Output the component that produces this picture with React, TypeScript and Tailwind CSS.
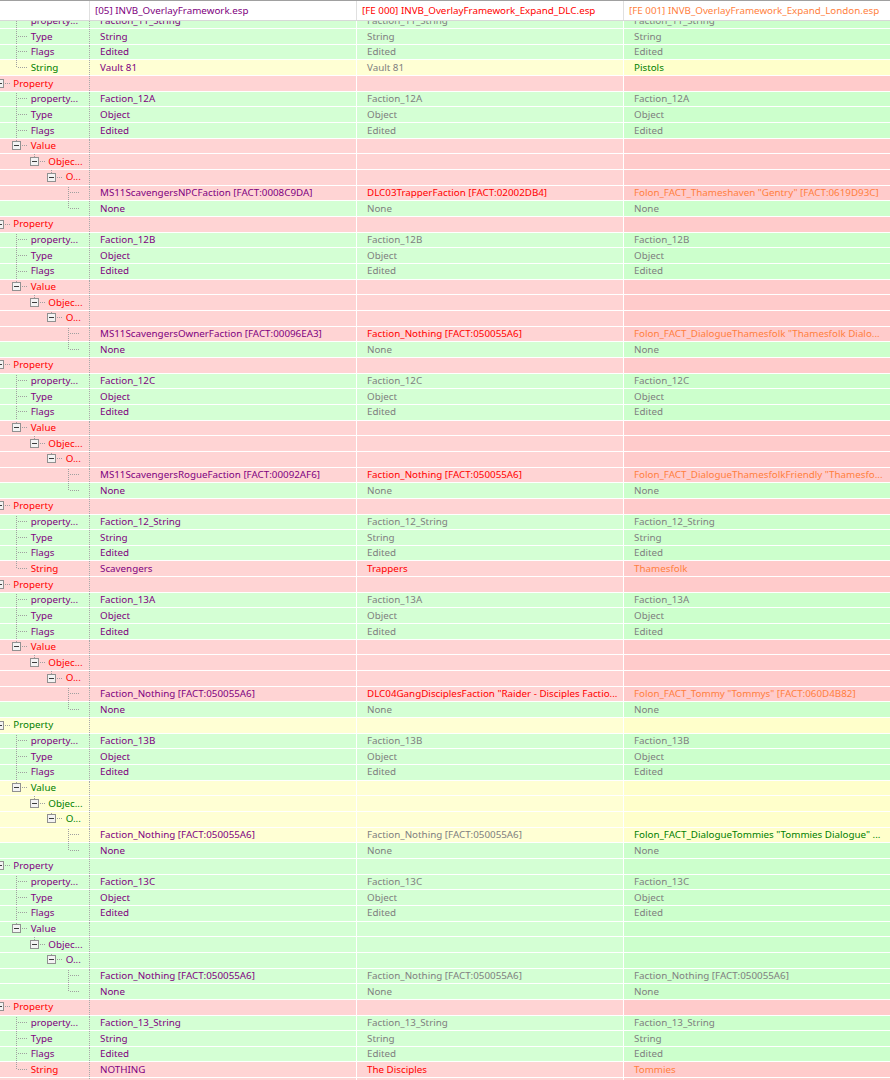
import React from 'react';

type Bg = 'g' | 'p' | 'y';
type C = 'pu' | 're' | 'gr' | 'or' | 'gn' | 'no';
type V = [string, C];

interface Row {
  level: number;
  label: string;
  box: boolean;
  last: boolean;
  bg: Bg;
  lc: C;
  v: V[];
}

const TXT: Record<C, string> = {
  pu: 'text-[#800080]',
  re: 'text-[#ff0000]',
  gr: 'text-[#808080]',
  or: 'text-[#ff7f40]',
  gn: 'text-[#008000]',
  no: '',
};

const BG: Record<Bg, string> = {
  g: 'bg-[#d4ffd4]',
  p: 'bg-[#ffd4d4]',
  y: 'bg-[#ffffd4]',
};
const BG4: Record<Bg, string> = {
  g: 'bg-[#ccffcc]',
  p: 'bg-[#ffcbcb]',
  y: 'bg-[#ffffcb]',
};

const E: V[] = [['', 'no'], ['', 'no'], ['', 'no']];
const RH = 15.66;
const LINE_PX = [-1, 16, 34, 51, 68];
const TEXT_X = [13.3, 30.7, 48.3, 65.7, 82.7];

function mk(level: number, label: string, box: boolean, last: boolean, bg: Bg, lc: C, v: V[]): Row {
  return { level, label, box, last, bg, lc, v };
}

function common(name: string, type: string): Row[] {
  return [
    mk(1, 'property...', false, false, 'g', 'pu', [[name, 'pu'], [name, 'gr'], [name, 'gr']]),
    mk(1, 'Type', false, false, 'g', 'pu', [[type, 'pu'], [type, 'gr'], [type, 'gr']]),
    mk(1, 'Flags', false, false, 'g', 'pu', [['Edited', 'pu'], ['Edited', 'gr'], ['Edited', 'gr']]),
  ];
}

function objGroup(name: string, bg: Bg, lc: C, leaf: V[]): Row[] {
  return [
    mk(0, 'Property', true, false, bg, lc, E),
    ...common(name, 'Object'),
    mk(1, 'Value', true, true, bg, lc, E),
    mk(2, 'Objec...', true, true, bg, lc, E),
    mk(3, 'O...', true, true, bg, lc, E),
    mk(4, '', false, false, bg, lc, leaf),
    mk(4, '', false, true, 'g', 'pu', [['None', 'pu'], ['None', 'gr'], ['None', 'gr']]),
  ];
}

function strGroup(name: string, bg: Bg, lc: C, vals: V[]): Row[] {
  return [
    mk(0, 'Property', true, false, bg, lc, E),
    ...common(name, 'String'),
    mk(1, 'String', false, true, bg, lc, vals),
  ];
}

const ROWS: Row[] = [
  ...strGroup('Faction_11_String', 'y', 'gn', [['Vault 81', 'pu'], ['Vault 81', 'gr'], ['Pistols', 'gn']]).slice(1),
  ...objGroup('Faction_12A', 'p', 're', [
    ['MS11ScavengersNPCFaction [FACT:0008C9DA]', 'pu'],
    ['DLC03TrapperFaction [FACT:02002DB4]', 're'],
    ['Folon_FACT_Thameshaven "Gentry" [FACT:0619D93C]', 'or'],
  ]),
  ...objGroup('Faction_12B', 'p', 're', [
    ['MS11ScavengersOwnerFaction [FACT:00096EA3]', 'pu'],
    ['Faction_Nothing [FACT:050055A6]', 're'],
    ['Folon_FACT_DialogueThamesfolk "Thamesfolk Dialo...', 'or'],
  ]),
  ...objGroup('Faction_12C', 'p', 're', [
    ['MS11ScavengersRogueFaction [FACT:00092AF6]', 'pu'],
    ['Faction_Nothing [FACT:050055A6]', 're'],
    ['Folon_FACT_DialogueThamesfolkFriendly "Thamesfo...', 'or'],
  ]),
  ...strGroup('Faction_12_String', 'p', 're', [['Scavengers', 'pu'], ['Trappers', 're'], ['Thamesfolk', 'or']]),
  ...objGroup('Faction_13A', 'p', 're', [
    ['Faction_Nothing [FACT:050055A6]', 'pu'],
    ['DLC04GangDisciplesFaction "Raider - Disciples Factio...', 're'],
    ['Folon_FACT_Tommy "Tommys" [FACT:060D4B82]', 'or'],
  ]),
  ...objGroup('Faction_13B', 'y', 'gn', [
    ['Faction_Nothing [FACT:050055A6]', 'pu'],
    ['Faction_Nothing [FACT:050055A6]', 'gr'],
    ['Folon_FACT_DialogueTommies "Tommies Dialogue" ...', 'gn'],
  ]),
  ...objGroup('Faction_13C', 'g', 'pu', [
    ['Faction_Nothing [FACT:050055A6]', 'pu'],
    ['Faction_Nothing [FACT:050055A6]', 'gr'],
    ['Faction_Nothing [FACT:050055A6]', 'gr'],
  ]),
  ...strGroup('Faction_13_String', 'p', 're', [['NOTHING', 'pu'], ['The Disciples', 're'], ['Tommies', 'or']]),
  ...strGroup('Faction_14_String', 'p', 're', [['NOTHING', 'pu'], ['The Disciples', 're'], ['Tommies', 'or']]).slice(0, 2),
];

function TreeGlyph({ row }: { row: Row }) {
  const px = LINE_PX[row.level];
  const cx = px + 0.5;
  const tx = TEXT_X[row.level];
  const my = 7.5;
  const dot = { stroke: '#a0a0a0', strokeWidth: 1, strokeDasharray: '1 1' } as const;
  return (
    <svg width={tx} height={RH} className="shrink-0 overflow-hidden" shapeRendering="crispEdges">
      {row.level >= 1 && !row.box && (
        <line x1={cx} y1={0} x2={cx} y2={row.last ? my : RH} {...dot} />
      )}
      {row.level >= 1 && row.box && <line x1={cx} y1={0} x2={cx} y2={my - 4} {...dot} />}
      <line x1={row.box ? cx + 5 : cx + 1} y1={my} x2={tx - 3} y2={my} {...dot} />
      {row.box && (
        <g>
          <rect x={px - 4 + 0.5} y={my - 4} width={8} height={8} fill="#f3f3f3" stroke="#919191" strokeWidth={1} />
          <line x1={px - 2} y1={my} x2={px + 3} y2={my} stroke="#3c3c3c" strokeWidth={1} />
        </g>
      )}
    </svg>
  );
}

function DataRow({ row }: { row: Row }) {
  return (
    <div className="flex h-[15.66px] border-b border-dotted border-white/90">
      <div className={`flex w-[90px] shrink-0 items-center overflow-hidden border-r border-dotted border-[#a8a8a8] ${BG[row.bg]}`}>
        <TreeGlyph row={row} />
        <span className={`whitespace-nowrap ${TXT[row.lc]}`}>{row.label}</span>
      </div>
      <div className={`flex w-[267px] shrink-0 items-center overflow-hidden whitespace-nowrap border-r border-white pl-[10px] ${BG[row.bg]} ${TXT[row.v[0][1]]}`}>
        {row.v[0][0]}
      </div>
      <div className={`flex w-[267px] shrink-0 items-center overflow-hidden whitespace-nowrap border-r border-white pl-[10px] ${BG[row.bg]} ${TXT[row.v[1][1]]}`}>
        {row.v[1][0]}
      </div>
      <div className={`flex w-[266px] shrink-0 items-center overflow-hidden whitespace-nowrap pl-[10px] ${BG4[row.bg]} ${TXT[row.v[2][1]]}`}>
        {row.v[2][0]}
      </div>
    </div>
  );
}

export default function App() {
  return (
    <div
      className="relative flex h-[1080px] w-[890px] flex-col overflow-hidden bg-white text-[9.8px] leading-none"
      style={{ fontFamily: '"Noto Sans", "Open Sans", sans-serif' }}
    >
      <div className="relative z-10 flex h-[21px] shrink-0 border-y border-t-[#a0a0a0] border-b-[#d8d8d8] bg-white">
        <div className="w-[90px] shrink-0 border-r border-[#e0e0e0]" />
        <div className="flex w-[267px] shrink-0 items-center border-r border-[#e0e0e0] pl-[5px] text-[#800080]">
          [05] INVB_OverlayFramework.esp
        </div>
        <div className="flex w-[267px] shrink-0 items-center border-r border-[#e0e0e0] pl-[5px] text-[#ff0000]">
          [FE 000] INVB_OverlayFramework_Expand_DLC.esp
        </div>
        <div className="flex w-[266px] shrink-0 items-center pl-[5px] text-[#ff7f40]">
          [FE 001] INVB_OverlayFramework_Expand_London.esp
        </div>
      </div>
      <div className="flex-1 overflow-hidden">
        <div className="mt-[-7.5px] flex flex-col">
          {ROWS.map((r, i) => (
            <DataRow key={i} row={r} />
          ))}
        </div>
      </div>
    </div>
  );
}
